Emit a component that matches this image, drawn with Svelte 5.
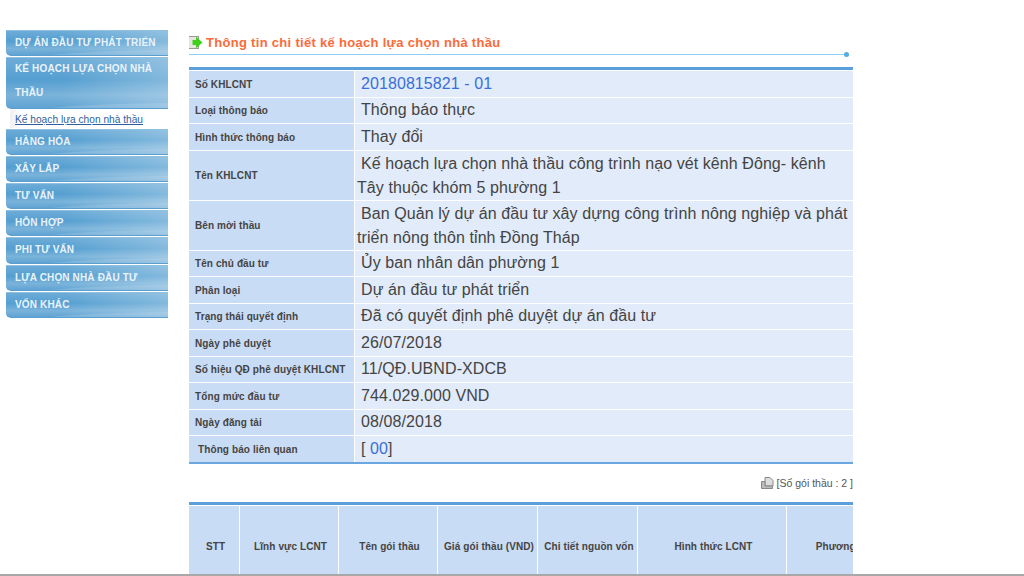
<script lang="ts">
	interface Row {
		label: string;
		value: string;
		tall?: boolean;
		link?: boolean;
	}

	const menu = [
		{ name: 'DỰ ÁN ĐẦU TƯ PHÁT TRIỂN' },
		{ name: 'KẾ HOẠCH LỰA CHỌN NHÀ THẦU', sub: 'Kế hoạch lựa chọn nhà thầu' },
		{ name: 'HÀNG HÓA' },
		{ name: 'XÂY LẮP' },
		{ name: 'TƯ VẤN' },
		{ name: 'HỖN HỢP' },
		{ name: 'PHI TƯ VẤN' },
		{ name: 'LỰA CHỌN NHÀ ĐẦU TƯ' },
		{ name: 'VỐN KHÁC' }
	];

	const rows: Row[] = [
		{ label: 'Số KHLCNT', value: '20180815821 - 01', link: true },
		{ label: 'Loại thông báo', value: 'Thông báo thực' },
		{ label: 'Hình thức thông báo', value: 'Thay đổi' },
		{ label: 'Tên KHLCNT', value: 'Kế hoạch lựa chọn nhà thầu công trình nạo vét kênh Đông- kênh Tây thuộc khóm 5 phường 1', tall: true },
		{ label: 'Bên mời thầu', value: 'Ban Quản lý dự án đầu tư xây dựng công trình nông nghiệp và phát triển nông thôn tỉnh Đồng Tháp', tall: true },
		{ label: 'Tên chủ đầu tư', value: 'Ủy ban nhân dân phường 1' },
		{ label: 'Phân loại', value: 'Dự án đầu tư phát triển' },
		{ label: 'Trạng thái quyết định', value: 'Đã có quyết định phê duyệt dự án đầu tư' },
		{ label: 'Ngày phê duyệt', value: '26/07/2018' },
		{ label: 'Số hiệu QĐ phê duyệt KHLCNT', value: '11/QĐ.UBND-XDCB' },
		{ label: 'Tổng mức đầu tư', value: '744.029.000 VND' },
		{ label: 'Ngày đăng tải', value: '08/08/2018' }
	];

	const columns = [
		{ name: 'STT', width: 50 },
		{ name: 'Lĩnh vực LCNT', width: 98 },
		{ name: 'Tên gói thầu', width: 98 },
		{ name: 'Giá gói thầu (VND)', width: 99 },
		{ name: 'Chi tiết nguồn vốn', width: 99 },
		{ name: 'Hình thức LCNT', width: 148 },
		{ name: 'Phương thức LCNT', width: 150 }
	];
</script>

<div class="page">
	<div class="content">
		<nav class="sidebar">
			{#each menu as item}
				<a class="menu-item" class:two-lines={item.sub} href="#top">{item.name}</a>
				{#if item.sub}
					<div class="submenu"><a href="#top">{item.sub}</a></div>
				{/if}
			{/each}
		</nav>

		<main class="main">
			<h1 class="title">
				<svg width="15" height="13" viewBox="0 0 15 13">
					<rect x="0.5" y="0.5" width="10" height="12" fill="#e6e6e0" stroke="#9a9a92" />
					<path d="M4.500 4H8V0.800L14.500 6.500 8 12.200V9H4.500z" fill="#3fcf1c" />
				</svg>
				Thông tin chi tiết kế hoạch lựa chọn nhà thầu
			</h1>
			<div class="title-line"><span class="dot"></span></div>

			<div class="info">
				{#each rows as row}
					<div class="label" class:tall={row.tall}>{row.label}</div>
					<div class="value" class:tall={row.tall} class:link={row.link}>{row.value}</div>
				{/each}
				<div class="label related">Thông báo liên quan</div>
				<div class="value">[ <span class="link">00</span>]</div>
			</div>

			<div class="count">
				<svg width="13" height="12" viewBox="0 0 13 12">
					<path d="M4 0.500h5l3 3v5.500H4z" fill="#ddd" stroke="#888" />
					<path d="M0.500 4.500H4V9h7.500v2.500H0.500z" fill="#bbb" stroke="#888" />
				</svg>
				<span>[Số gói thầu : 2 ]</span>
			</div>

			<div class="packages">
				{#each columns as col}
					<div class="head" style="width: {col.width}px">{col.name}</div>
				{/each}
			</div>
		</main>
	</div>
	<div class="bottom-line"></div>
</div>

<style>
	:global(body) {
		margin: 0;
		background: #fff;
	}

	.page {
		width: 1024px;
		height: 576px;
		display: flex;
		flex-direction: column;
		overflow: hidden;
		font-family: "Liberation Sans", Arial, sans-serif;
	}

	.content {
		flex: 1;
		min-height: 0;
		display: flex;
		overflow: hidden;
	}

	.sidebar {
		width: 162px;
		margin: 30px 0 0 6px;
		display: flex;
		flex-direction: column;
		gap: 1px;
	}

	.menu-item {
		position: relative;
		display: block;
		padding: 0 6px 0 9px;
		font-size: 10px;
		font-weight: bold;
		line-height: 25.200px;
		letter-spacing: 0.15px;
		color: #eaf3fa;
		text-decoration: none;
		border-bottom: 1px solid #5b9fd0;
		border-bottom-left-radius: 5px;
		background: linear-gradient(100deg, rgba(255, 255, 255, 0) 35%, rgba(255, 255, 255, 0.28) 100%),
			linear-gradient(180deg, #6fadd8 0%, #559fd1 45%, #7ab3da 75%, #5fa3d3 100%);
		overflow: hidden;
		box-shadow: inset 0 1px 0 #8fc0e0;
	}

	.menu-item.two-lines {
		line-height: 24px;
		padding-bottom: 2.400px;
	}

	.menu-item::after {
		content: '';
		position: absolute;
		left: 3px;
		right: -20px;
		bottom: -9px;
		height: 14px;
		border-radius: 100% 0 0 0 / 100% 0 0 0;
		background: rgba(255, 255, 255, 0.14);
	}

	.submenu {
		margin-left: 4px;
		padding: 0 5px;
		height: 18px;
		line-height: 15px;
		background: linear-gradient(90deg, #f0f0f0, #fff 12px);
	}

	.submenu a {
		font-size: 10.200px;
		color: #2f5f9f;
	}

	.main {
		width: 664px;
		margin-left: 21px;
		flex-shrink: 0;
		overflow: hidden;
	}

	.title {
		margin: 34px 0 0 -1px;
		display: flex;
		align-items: center;
		gap: 3px;
		height: 17px;
		font-size: 13px;
		line-height: 17px;
		font-weight: bold;
		letter-spacing: 0.3px;
		color: #fb6a3a;
	}

	.title-line {
		position: relative;
		margin: 3px 0 0 -1px;
		height: 1px;
		width: 661px;
		background: #8fd0f2;
	}

	.dot {
		position: absolute;
		right: 0;
		top: -2px;
		width: 5px;
		height: 5px;
		border-radius: 50%;
		background: #52aee4;
	}

	.info {
		margin-top: 12px;
		display: grid;
		grid-template-columns: 165px 1fr;
		column-gap: 1px;
		row-gap: 1px;
		padding: 1px 0 0;
		border-top: 3px solid #5b9fdc;
		border-bottom: 2px solid #6aa6e0;
	}

	.label {
		display: flex;
		align-items: center;
		min-height: 25.500px;
		padding: 0.500px 0 0 6px;
		box-sizing: border-box;
		font-size: 10px;
		font-weight: bold;
		letter-spacing: 0.1px;
		color: #444;
		background: #c9dcf5;
	}

	.label.related {
		padding-left: 9px;
	}

	.value {
		min-height: 25.500px;
		box-sizing: border-box;
		padding: 0.700px 2px 0 6px;
		font-size: 16px;
		line-height: 24.800px;
		letter-spacing: 0.08px;
		color: #444;
		background: #e1ebf9;
	}

	.value.tall {
		padding: 1px 2px 0 2px;
		text-indent: 4px;
		line-height: 24px;
		min-height: 49px;
	}

	.value.link,
	.link {
		color: #3a6fd8;
	}

	.count {
		margin-top: 12px;
		display: flex;
		justify-content: flex-end;
		align-items: center;
		gap: 3px;
		height: 14px;
		font-size: 10.500px;
		color: #555;
	}

	.packages {
		margin-top: 12px;
		display: flex;
		gap: 1px;
		border-top: 3px solid #5b9fdc;
		padding-top: 1px;
		height: 90px;
	}

	.head {
		flex-shrink: 0;
		box-sizing: border-box;
		display: flex;
		align-items: center;
		justify-content: center;
		padding: 0 0 8px 3px;
		font-size: 10px;
		font-weight: bold;
		letter-spacing: 0.1px;
		white-space: nowrap;
		color: #444;
		background: #c9dcf5;
	}

	.bottom-line {
		height: 2px;
		flex-shrink: 0;
		background: #a8a8a8;
	}
</style>
